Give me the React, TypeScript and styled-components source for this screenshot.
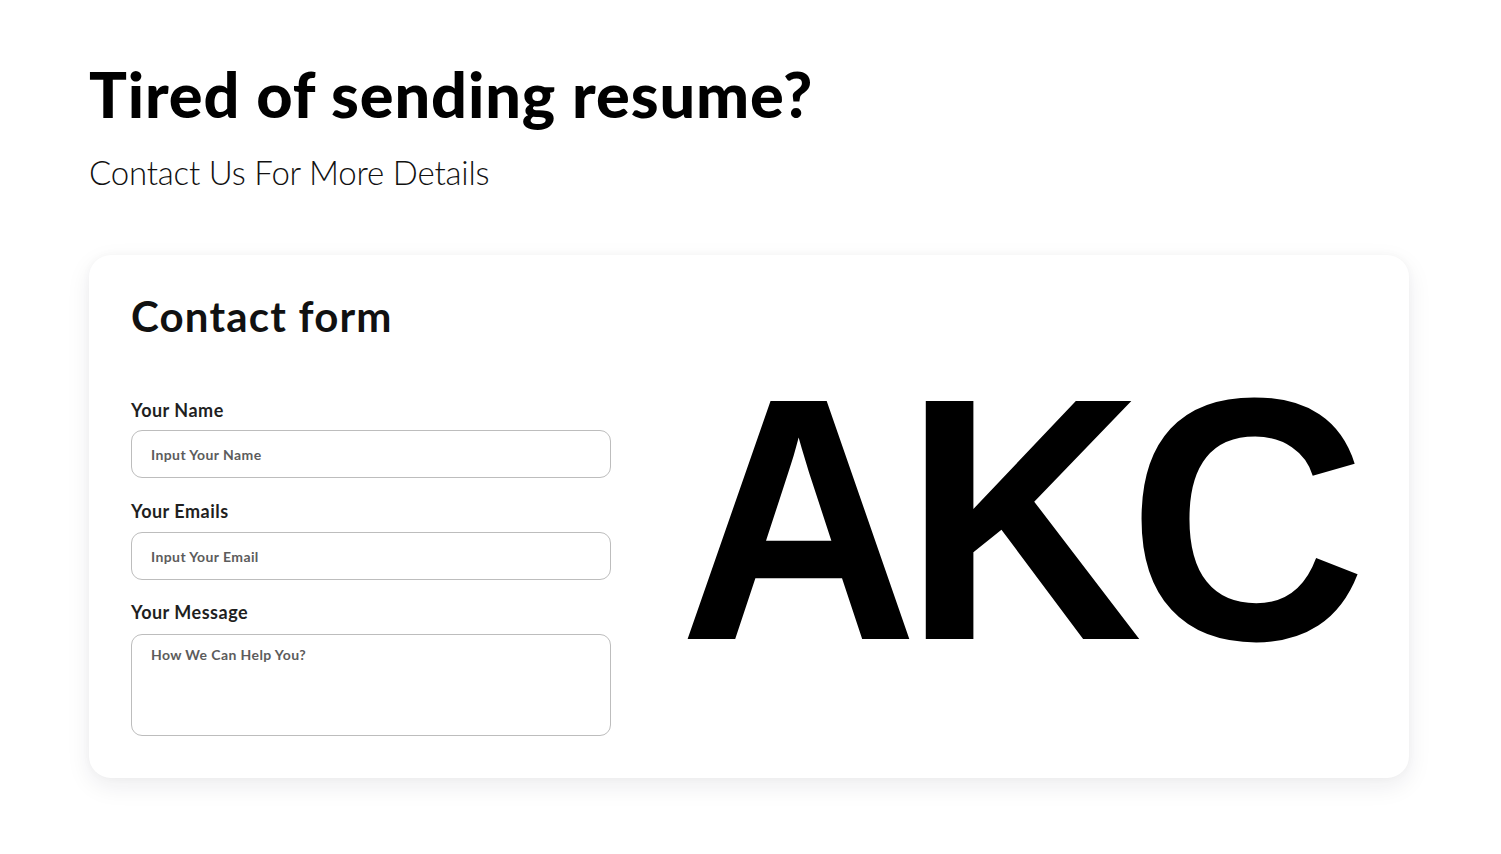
import React from "react";
import styled, { createGlobalStyle } from "styled-components";

const Global = createGlobalStyle`
  * { box-sizing: border-box; }
  html, body { margin: 0; padding: 0; background: #ffffff; }
  body { font-family: "Lato", "Noto Sans", sans-serif; color: #111; }
`;

const Page = styled.main`
  min-height: 100vh;
  padding: 58px 92px 40px 89px;
  display: flex;
  flex-direction: column;
`;

const Title = styled.h1`
  margin: 0;
  font-family: "Lato", sans-serif;
  font-weight: 900;
  font-size: 63px;
  line-height: 72px;
  color: #000;
  letter-spacing: 0.9px;
`;

const Subtitle = styled.p`
  margin: 22px 0 0;
  font-family: "Lato", sans-serif;
  font-weight: 300;
  font-size: 33px;
  line-height: 40px;
  color: #111;
  letter-spacing: -0.2px;
`;

const Card = styled.section`
  margin-top: 63px;
  width: 1320px;
  height: 523px;
  flex-shrink: 0;
  background: #fff;
  border-radius: 22px;
  box-shadow: 0 8px 24px rgba(20, 30, 50, 0.08), 0 0 8px rgba(0, 0, 0, 0.03);
  padding: 36px 42px 42px 42px;
  display: flex;
  flex-direction: column;
`;

const CardTitle = styled.h2`
  margin: 0;
  font-family: "Lato", sans-serif;
  font-weight: 700;
  font-size: 42px;
  line-height: 50px;
  letter-spacing: 1.2px;
  color: #111;
`;

const Body = styled.div`
  margin-top: 58px;
  display: flex;
  align-items: flex-start;
`;

const Form = styled.form`
  width: 480px;
  display: flex;
  flex-direction: column;
`;

const Field = styled.label`
  display: flex;
  flex-direction: column;
  gap: 10px;
  margin-bottom: 21px;
  &:first-child { gap: 9px; margin-bottom: 22px; }
  &:last-child { margin-bottom: 0; gap: 11px; }
`;

const Label = styled.span`
  font-family: "Lato", sans-serif;
  font-weight: 700;
  font-size: 18px;
  line-height: 22px;
  letter-spacing: 0.5px;
  color: #1f1f1f;
`;

const inputBase = `
  width: 100%;
  border: 1px solid #bdbdbd;
  border-radius: 11px;
  background: #fff;
  padding: 0 19px;
  font-family: "Lato", sans-serif;
  font-weight: 700;
  font-size: 14px;
  letter-spacing: 0.4px;
  color: #333;
  outline: none;
  &::placeholder { color: #5c5c5c; opacity: 1; }
`;

const Input = styled.input`
  ${inputBase}
  height: 48px;
`;

const TextArea = styled.textarea`
  ${inputBase}
  height: 102px;
  padding-top: 11px;
  resize: none;
  line-height: 18px;
`;

const Logo = styled.div`
  flex: 1;
  display: flex;
  justify-content: flex-end;
  margin-top: -53px;
`;

const LogoText = styled.span`
  font-family: "Liberation Sans", Arial, sans-serif;
  font-weight: 700;
  font-size: 346px;
  line-height: 1;
  color: #000;
  display: flex;
  transform: scaleX(0.955);
  transform-origin: right center;
`;

const Letter = styled.span<{ $after?: number }>`
  display: inline-block;
  margin-right: ${(p) => p.$after ?? 0}px;
`;

export default function App() {
  return (
    <>
      <Global />
      <Page>
        <Title>Tired of sending resume?</Title>
        <Subtitle>Contact Us For More Details</Subtitle>
        <Card>
          <CardTitle>Contact form</CardTitle>
          <Body>
            <Form onSubmit={(e) => e.preventDefault()}>
              <Field>
                <Label>Your Name</Label>
                <Input placeholder="Input Your Name" />
              </Field>
              <Field>
                <Label>Your Emails</Label>
                <Input placeholder="Input Your Email" />
              </Field>
              <Field>
                <Label>Your Message</Label>
                <TextArea placeholder="How We Can Help You?" />
              </Field>
            </Form>
            <Logo aria-label="AKC">
              <LogoText>
                <Letter $after={-15}>A</Letter>
                <Letter $after={-15}>K</Letter>
                <Letter>C</Letter>
              </LogoText>
            </Logo>
          </Body>
        </Card>
      </Page>
    </>
  );
}
